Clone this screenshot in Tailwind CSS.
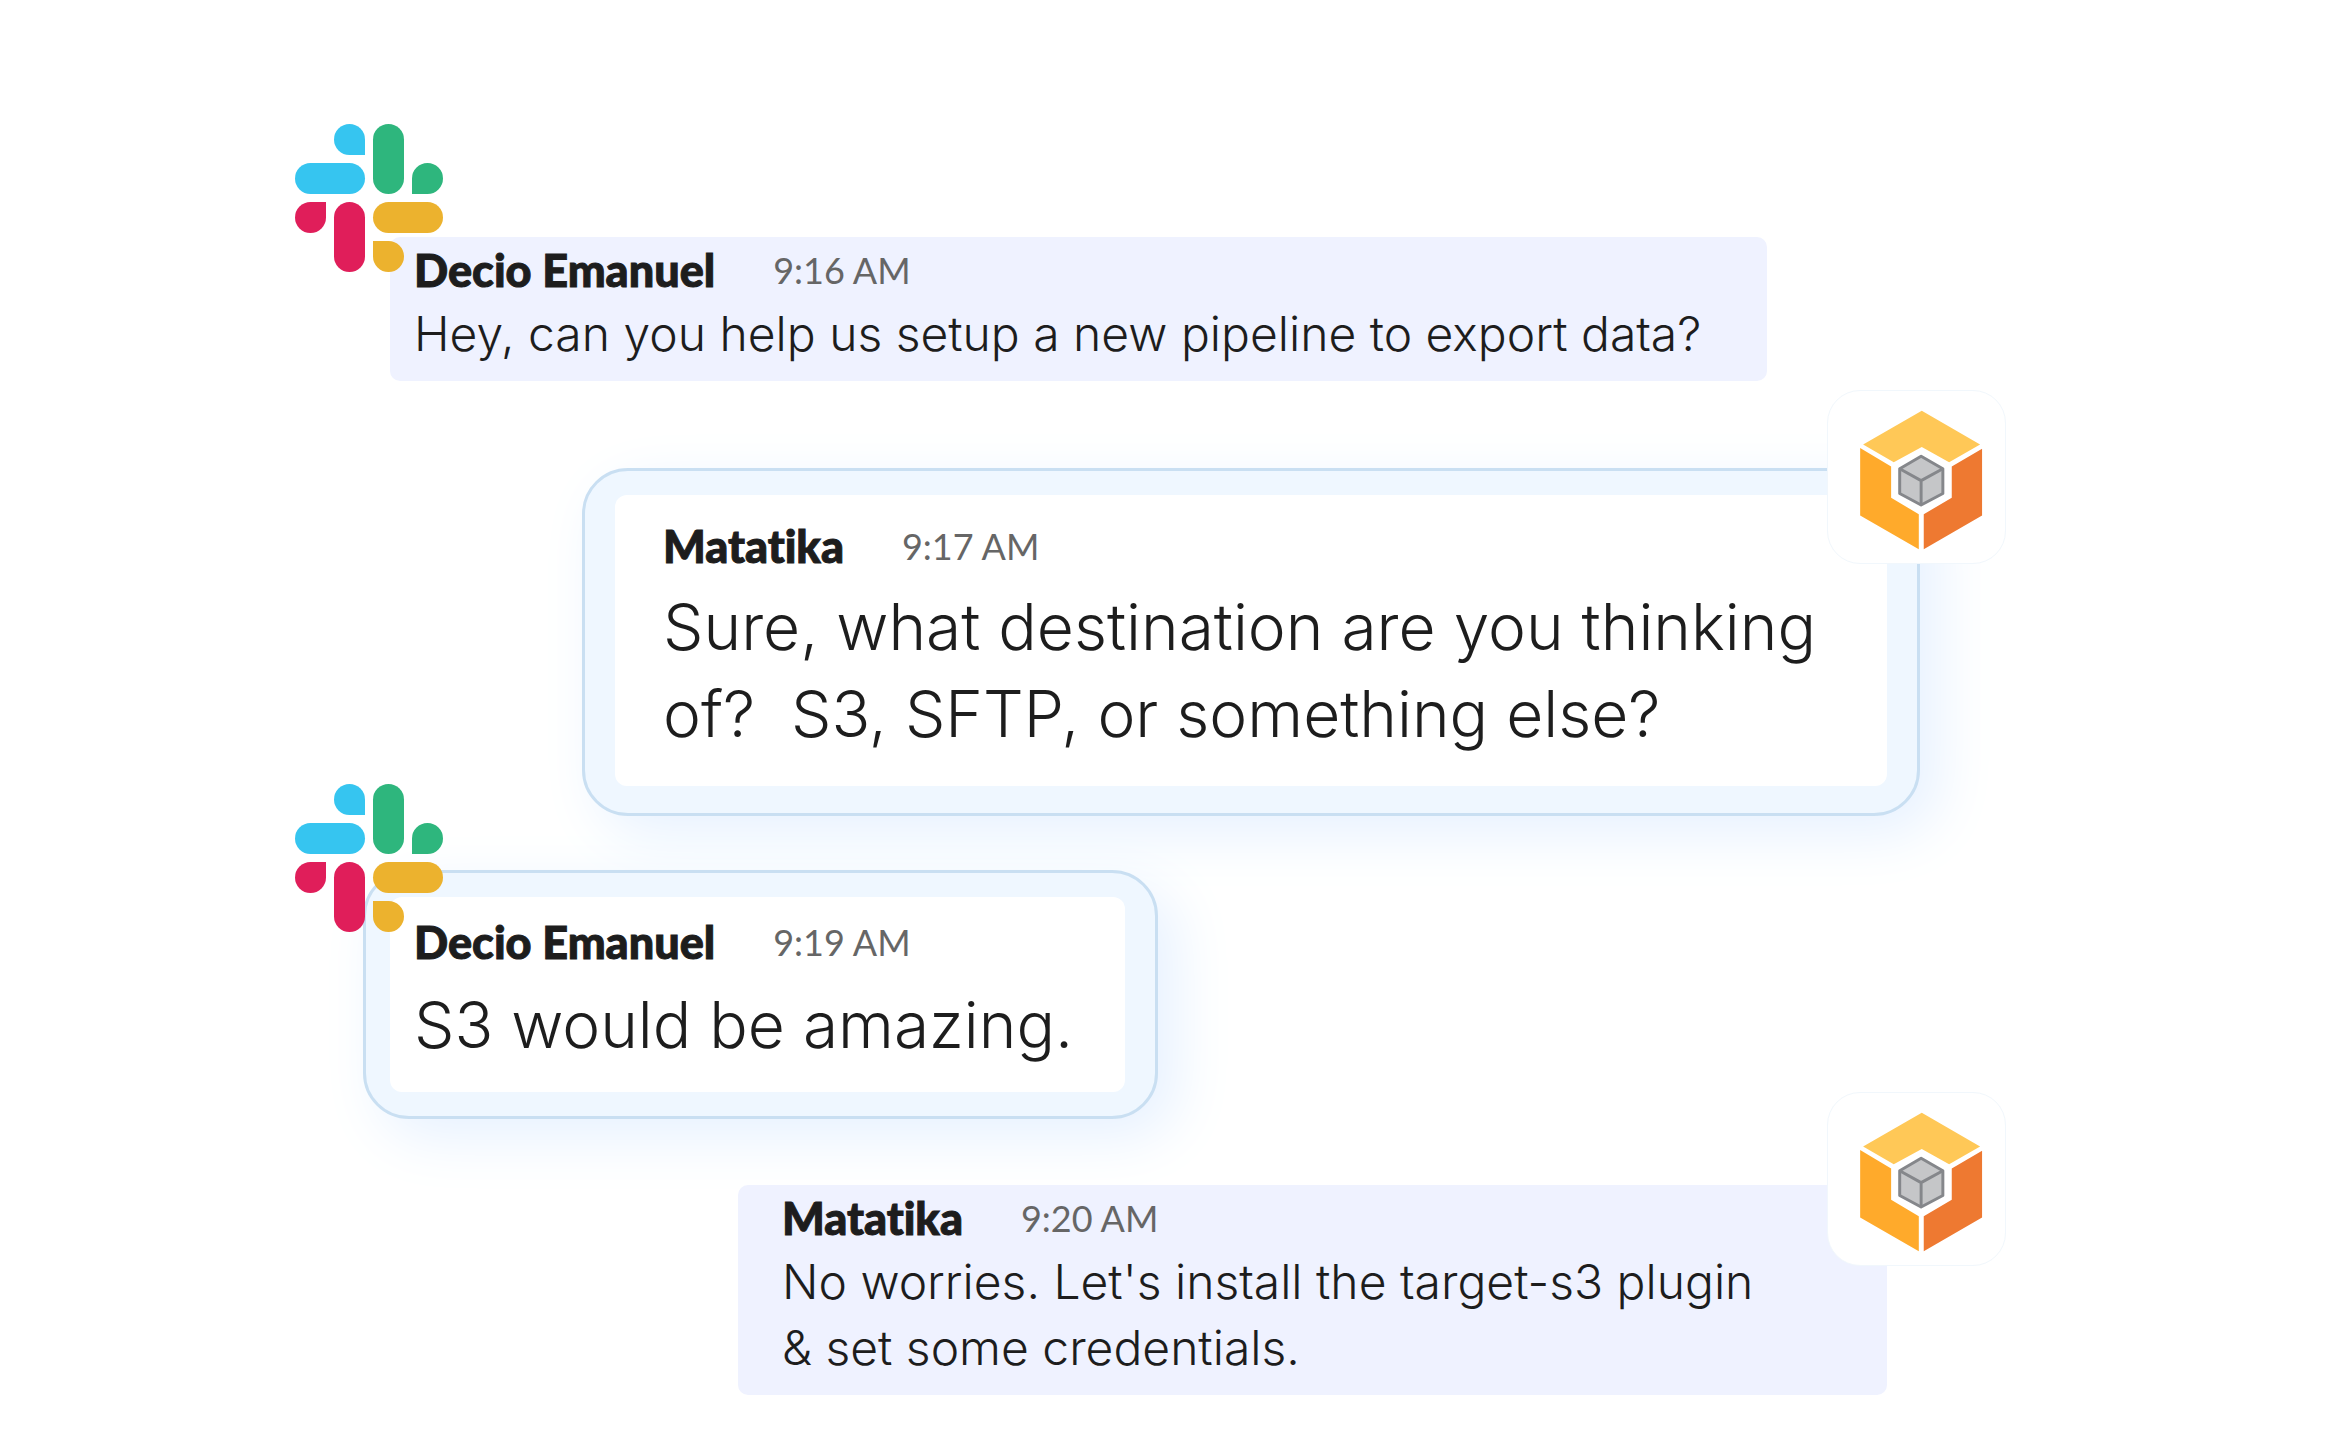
<!DOCTYPE html>
<html lang="en">
<head>
    <meta charset="UTF-8">
    <meta name="viewport" content="width=device-width, initial-scale=1.0">
    <title>Chat</title>
    <script src="https://cdn.jsdelivr.net/npm/@tailwindcss/browser@4"></script>
</head>
<body class="bg-white text-[#1d1d1d] font-['Inter',sans-serif]">

    <!-- Shared logos -->
    <svg class="hidden">
        <symbol id="slack-logo" viewBox="0 0 148 148">
            <g fill="#36c5f0">
                <path d="M54.500 0A15.500 15.500 0 0 0 54.500 31H70V15.500A15.500 15.500 0 0 0 54.500 0Z"/>
                <rect x="0" y="39" width="70" height="31" rx="15.500"/>
            </g>
            <g fill="#2eb67d">
                <rect x="78" y="0" width="31" height="70" rx="15.500"/>
                <path d="M117 70V54.500A15.500 15.500 0 1 1 132.500 70Z"/>
            </g>
            <g fill="#e01e5a">
                <path d="M31 78V93.500A15.500 15.500 0 1 1 15.500 78Z"/>
                <rect x="39" y="78" width="31" height="70" rx="15.500"/>
            </g>
            <g fill="#ecb22e">
                <rect x="78" y="78" width="70" height="31" rx="15.500"/>
                <path d="M78 117H93.500A15.500 15.500 0 1 1 78 132.500Z"/>
            </g>
        </symbol>
        <symbol id="matatika-logo" viewBox="142 60 534 522">
            <polygon fill="#ffc857" points="425,120 602,222 508,276 425,230 340,276 247,222"/>
            <polygon fill="#ffaa2b" points="238,233 332,289 332,384 416,434 416,540 238,438"/>
            <polygon fill="#ee7931" points="608,235 516,289 516,384 431,434 431,540 608,438"/>
            <g fill="#c5c6c8" stroke="#85878b" stroke-width="9" stroke-linejoin="round">
                <polygon points="423,258 489,296 489,371 423,406 358,371 358,296"/>
                <path fill="none" d="M358 296L423 332L489 296M423 332V406"/>
            </g>
        </symbol>
    </svg>

    <main class="w-full max-w-[1741px] mx-auto pt-[237px] pb-[60px]">

        <!-- Message 1 -->
        <article class="relative ml-[95px] w-[1377px] max-w-full rounded-[10px] bg-[#eff2ff] px-6 pb-3.5">
            <svg class="absolute -left-[95px] -top-[113px] size-[148px]" role="img" aria-label="Slack"><use href="#slack-logo"/></svg>
            <header class="flex items-center gap-[58px] font-['Lato',sans-serif] leading-[66px]">
                <h2 class="text-[45px] font-black [font-variant-ligatures:none] [-webkit-text-stroke:1px_#1d1d1d]">Decio Emanuel</h2>
                <time class="text-[36px] text-[#666]">9:16 AM</time>
            </header>
            <p class="-mt-0.5 text-[48px] leading-[66px] font-light">Hey, can you help us setup a new pipeline to export data?</p>
        </article>

        <!-- Message 2 -->
        <article class="relative mt-[87px] ml-[287px] w-[1338px] max-w-full rounded-[46px] border-3 border-[#c9dff2] bg-[#eff7ff] pt-6 px-[30px] pb-[27px] shadow-[18px_18px_60px_#e6f1ff]">
            <div class="rounded-xl bg-white pt-[18px] pr-4 pb-[29px] pl-12">
                <header class="flex items-center gap-[58px] font-['Lato',sans-serif] leading-[66px]">
                    <h2 class="text-[45px] font-black [font-variant-ligatures:none] [-webkit-text-stroke:1px_#1d1d1d]">Matatika</h2>
                    <time class="text-[36px] text-[#666]">9:17 AM</time>
                </header>
                <p class="mt-1 text-[64px] leading-[87px] font-light">Sure, what destination are you thinking<br>of?&nbsp; S3, SFTP, or something else?</p>
            </div>
            <svg class="absolute -right-[89px] -top-[81px] w-[179px] h-[174px] rounded-[33px] border border-[#f1f7fc] bg-white" role="img" aria-label="Matatika"><use href="#matatika-logo"/></svg>
        </article>

        <!-- Message 3 -->
        <article class="relative mt-[54px] ml-[68px] w-[795px] max-w-full rounded-[46px] border-3 border-[#c9dff2] bg-[#eff7ff] pt-6 pr-[30px] pb-6 pl-6 shadow-[18px_18px_60px_#e6f1ff]">
            <div class="rounded-xl bg-white pt-3 pr-4 pb-6 pl-6">
                <header class="flex items-center gap-[58px] font-['Lato',sans-serif] leading-[66px]">
                    <h2 class="text-[45px] font-black [font-variant-ligatures:none] [-webkit-text-stroke:1px_#1d1d1d]">Decio Emanuel</h2>
                    <time class="text-[36px] text-[#666]">9:19 AM</time>
                </header>
                <p class="mt-1.5 text-[64px] leading-[87px] font-light">S3 would be amazing.</p>
            </div>
            <svg class="absolute -left-[71px] -top-[89px] size-[148px]" role="img" aria-label="Slack"><use href="#slack-logo"/></svg>
        </article>

        <!-- Message 4 -->
        <article class="relative mt-[66px] ml-[443px] w-[1149px] max-w-full rounded-[10px] bg-[#eff2ff] pl-11 pr-4 pb-3.5">
            <header class="flex items-center gap-[58px] font-['Lato',sans-serif] leading-[66px]">
                <h2 class="text-[45px] font-black [font-variant-ligatures:none] [-webkit-text-stroke:1px_#1d1d1d]">Matatika</h2>
                <time class="text-[36px] text-[#666]">9:20 AM</time>
            </header>
            <p class="-mt-0.5 text-[48px] leading-[66px] font-light">No worries. Let's install the target-s3 plugin<br>&amp; set some credentials.</p>
            <svg class="absolute -right-[119px] -top-[93px] w-[179px] h-[174px] rounded-[33px] border border-[#f1f7fc] bg-white" role="img" aria-label="Matatika"><use href="#matatika-logo"/></svg>
        </article>

    </main>
</body>
</html>
